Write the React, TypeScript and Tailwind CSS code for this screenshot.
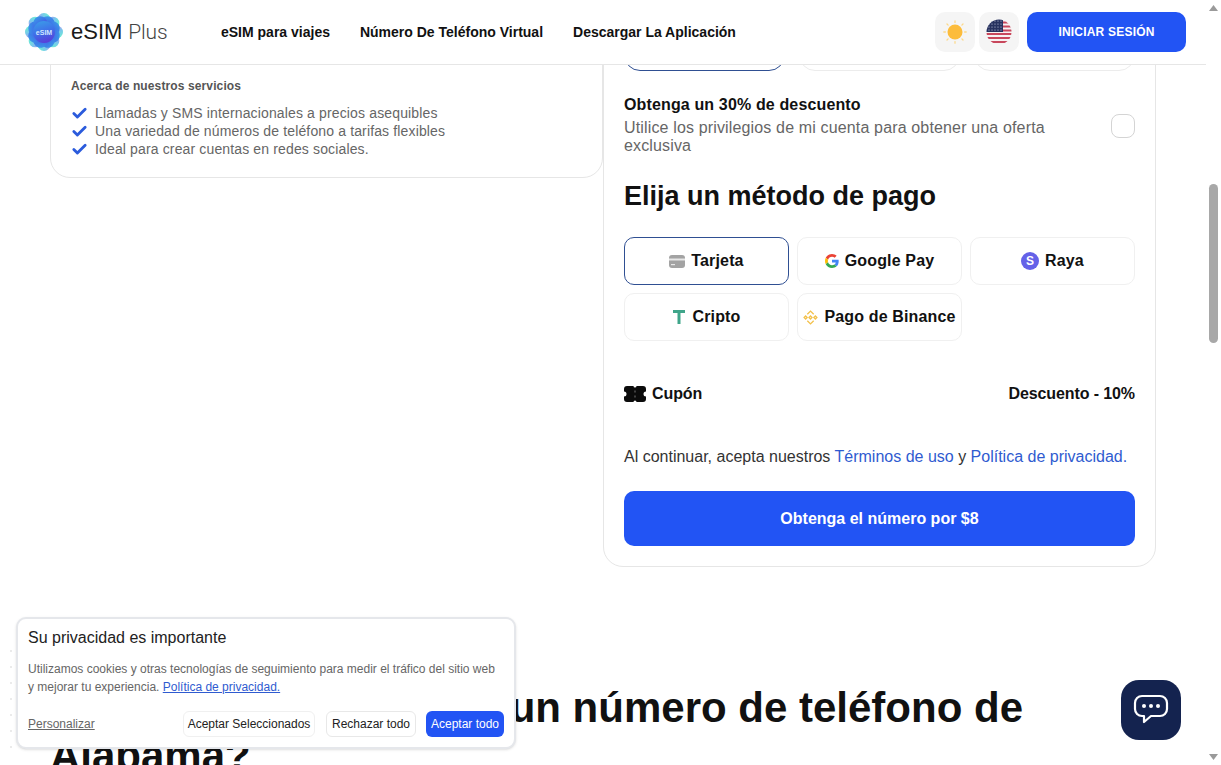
import { Check } from "lucide-react";

const navLinks = ["eSIM para viajes", "Número De Teléfono Virtual", "Descargar La Aplicación"];
const services = [
  "Llamadas y SMS internacionales a precios asequibles",
  "Una variedad de números de teléfono a tarifas flexibles",
  "Ideal para crear cuentas en redes sociales.",
];
const bannerDots = [0, 1, 2, 3, 4, 5, 6];

function Logo() {
  const petals = [0, 45, 90, 135, 180, 225, 270, 315];
  return (
    <svg width="40" height="40" viewBox="0 0 40 40">
      <defs>
        <linearGradient id="logoFill" x1="0.3" y1="0" x2="0.6" y2="1">
          <stop offset="0" stopColor="#3b9ae8" />
          <stop offset="0.5" stopColor="#3f6fe8" />
          <stop offset="1" stopColor="#5a3bd8" />
        </linearGradient>
        <linearGradient id="logoGlow" x1="0" y1="0.7" x2="1" y2="0.3">
          <stop offset="0" stopColor="#b06be8" />
          <stop offset="0.5" stopColor="#58b8e8" />
          <stop offset="1" stopColor="#48ecc8" />
        </linearGradient>
      </defs>
      <g opacity="0.8">
        {petals.map((a) => (
          <circle key={a} cx="20" cy="7.500" r="6.500" fill="url(#logoGlow)" transform={`rotate(${a} 20 20)`} />
        ))}
      </g>
      {petals.map((a) => (
        <circle key={a} cx="20" cy="10.500" r="7" fill="url(#logoFill)" transform={`rotate(${a + 22} 20 20)`} />
      ))}
      <circle cx="20" cy="20" r="11" fill="url(#logoFill)" />
      <text x="20" y="22.500" textAnchor="middle" fontSize="7" fontWeight="700" fill="#cfe6ff" fontFamily="Liberation Sans">
        eSIM
      </text>
    </svg>
  );
}

function SunIcon() {
  return (
    <svg width="24" height="24" viewBox="0 0 24 24" stroke="#fcd98a" strokeWidth="1.300" strokeLinecap="round">
      <circle cx="12" cy="12" r="7.500" fill="#fcbc3b" stroke="none" />
      <path d="M12 .8v1.600M12 21.600v1.600M.8 12h1.600M21.600 12h1.600M4 4l1.100 1.100M18.900 18.900 20 20M4 20l1.100-1.100M18.900 5.100 20 4" />
    </svg>
  );
}

function FlagIcon() {
  const lower = [14, 18, 22];
  const upper = [2.500, 6.500, 10.500];
  const stars = [2, 5, 8, 11];
  return (
    <svg width="26" height="26" viewBox="0 0 26 26">
      <clipPath id="flagClip">
        <circle cx="13" cy="13" r="12.500" />
      </clipPath>
      <g clipPath="url(#flagClip)">
        <rect width="26" height="26" fill="#f7f2f2" />
        {lower.map((y) => (
          <rect key={y} x="0" y={y} width="26" height="2" fill="#c8475c" />
        ))}
        {upper.map((y) => (
          <rect key={y} x="16" y={y} width="10" height="2" fill="#c8475c" />
        ))}
        <rect width="17" height="13" fill="#27325f" />
        {stars.map((y) =>
          [3, 6, 9, 12, 15].map((x) => <circle key={`${x}-${y}`} cx={x} cy={y} r="0.600" fill="#c9cfe6" />),
        )}
      </g>
    </svg>
  );
}

function CardIcon() {
  return (
    <svg width="16" height="13" viewBox="0 0 16 13">
      <rect width="16" height="13" rx="3" fill="#a3a3a3" />
      <rect y="3.500" width="16" height="2" fill="#e8e8e8" />
      <rect x="2" y="9" width="4" height="1.200" fill="#e8e8e8" />
    </svg>
  );
}

function GoogleIcon() {
  return (
    <svg width="14" height="14" viewBox="0 0 48 48">
      <path fill="#EA4335" d="M24 9.500c3.500 0 6.700 1.200 9.100 3.600l6.800-6.800C35.800 2.500 30.300 0 24 0 14.600 0 6.500 5.400 2.600 13.200l7.900 6.200C12.400 13.700 17.700 9.500 24 9.500z" />
      <path fill="#4285F4" d="M46.900 24.500c0-1.600-.1-3.100-.4-4.500H24v9h12.900c-.6 3-2.200 5.500-4.700 7.200l7.700 6c4.500-4.200 7-10.300 7-17.700z" />
      <path fill="#FBBC05" d="M10.500 28.600c-.5-1.400-.8-3-.8-4.600s.3-3.200.8-4.600l-7.900-6.200C.9 16.500 0 20.100 0 24s.9 7.500 2.600 10.800l7.900-6.200z" />
      <path fill="#34A853" d="M24 48c6.500 0 11.900-2.100 15.900-5.800l-7.700-6c-2.200 1.400-4.900 2.300-8.200 2.300-6.300 0-11.600-4.200-13.500-9.900l-7.900 6.200C6.500 42.600 14.600 48 24 48z" />
    </svg>
  );
}

function StripeIcon() {
  return (
    <svg width="18" height="18" viewBox="0 0 18 18">
      <circle cx="9" cy="9" r="9" fill="#6461e8" />
      <text x="9" y="13.300" textAnchor="middle" fontSize="12" fontWeight="700" fill="#fff" fontFamily="Liberation Sans">
        S
      </text>
    </svg>
  );
}

function TetherIcon() {
  return (
    <svg width="14" height="14" viewBox="-1 0 14 14" fill="#3fa58a">
      <path d="M0 0h12v3H7.500v11h-3V3H0z" />
    </svg>
  );
}

function BinanceIcon() {
  return (
    <svg width="15" height="15" viewBox="0 0 16 16" fill="none" stroke="#f3c14b" strokeWidth="1.400">
      <path d="M4.600 4.600 8 1.200l3.400 3.400M4.600 11.400 8 14.800l3.400-3.400" />
      <path d="M1.200 8 2.800 6.400 4.400 8 2.800 9.600zM11.600 8l1.600-1.600L14.800 8l-1.600 1.600zM6.400 8 8 6.400 9.600 8 8 9.600z" />
    </svg>
  );
}

function CouponIcon() {
  return (
    <svg width="22" height="16" viewBox="0 0 22 16" fill="#0b0b0b">
      <path d="M3 0h6.500a1.500 1.500 0 0 0 3 0H19a3 3 0 0 1 3 3v2.500a2.500 2.500 0 0 0 0 5V13a3 3 0 0 1-3 3h-6.500a1.500 1.500 0 0 0-3 0H3a3 3 0 0 1-3-3v-2.500a2.500 2.500 0 0 0 0-5V3a3 3 0 0 1 3-3z" />
      <path d="M10.500 4.500h1v2h-1zM10.500 9.500h1v2h-1z" fill="#777" />
    </svg>
  );
}

function PayOption({ icon, label, active }: { icon: React.ReactNode; label: string; active?: boolean }) {
  return (
    <button
      className={`flex h-12 items-center justify-center gap-[6px] rounded-[10px] border bg-white text-base font-bold tracking-[0.15px] text-[#111] ${
        active ? "border-[#2f4f92]" : "border-[#f0f0f0]"
      }`}
    >
      {icon}
      {label}
    </button>
  );
}

export default function App() {
  return (
    <div className="flex h-screen overflow-hidden bg-white font-['Liberation_Sans',Arial,sans-serif]">
      <div className="relative flex min-w-0 flex-1 flex-col">
        {/* HEADER */}
        <header className="flex h-[65px] shrink-0 items-center border-b border-[#e6e6e6] pr-5 pl-[24px]">
          <div className="flex w-[197px] items-center gap-[7px]">
            <Logo />
            <span className="flex items-baseline gap-[6px] text-[22px] leading-none text-[#1a1a1a]">
              eSIM
              <span className="font-['Roboto',sans-serif] text-[21px] font-light tracking-[-0.2px] text-[#444]">Plus</span>
            </span>
          </div>
          <nav className="flex gap-[30px]">
            {navLinks.map((link) => (
              <a key={link} className="text-sm font-bold text-[#111]">
                {link}
              </a>
            ))}
          </nav>
          <div className="ml-auto flex items-center gap-1">
            <div className="flex size-10 items-center justify-center rounded-[10px] bg-[#f5f5f5]">
              <SunIcon />
            </div>
            <div className="flex size-10 items-center justify-center rounded-[10px] bg-[#f5f5f5]">
              <FlagIcon />
            </div>
            <button className="ml-1 h-10 w-[159px] rounded-[10px] bg-[#2254f4] text-xs font-bold tracking-[0.2px] text-white">
              INICIAR SESIÓN
            </button>
          </div>
        </header>

        {/* PAGE */}
        <main className="flex-1 overflow-hidden px-[50px]">
          <div className="-mt-[63px] grid grid-cols-2 items-start">
            <div className="flex h-[176px] flex-col justify-end rounded-[20px] border border-[#e6e6e6] p-5 pb-[19px]">
              <h3 className="text-xs font-bold tracking-[0.12px] text-[#555]">Acerca de nuestros servicios</h3>
              <ul className="mt-[10px] flex flex-col">
                {services.map((s) => (
                  <li key={s} className="flex h-[18px] items-center gap-[7px] text-sm tracking-[0.14px] text-[#666]">
                    <Check size={17} strokeWidth={4} className="text-[#2b5bdc]" />
                    {s}
                  </li>
                ))}
              </ul>
            </div>

            <div className="rounded-[20px] border border-[#e6e6e6] p-5">
              <div className="grid grid-cols-3 gap-[14px]">
                <div className="h-12 rounded-[16px] border border-[#2f4f92]" />
                <div className="h-12 rounded-[16px] border border-[#ececec]" />
                <div className="h-12 rounded-[16px] border border-[#ececec]" />
              </div>

              <div className="mt-[25px] flex items-center justify-between">
                <div className="w-[450px]">
                  <p className="text-base leading-[18px] font-bold tracking-[0.14px] text-[#111]">
                    Obtenga un 30% de descuento
                  </p>
                  <p className="mt-[5px] text-base leading-[18px] tracking-[0.15px] text-[#666]">
                    Utilice los privilegios de mi cuenta para obtener una oferta exclusiva
                  </p>
                </div>
                <div className="size-6 rounded-lg border border-[#d4d4d4]" />
              </div>

              <h2 className="mt-[25px] text-[27px] leading-[32px] font-bold text-[#111]">Elija un método de pago</h2>

              <div className="mt-[25px] grid grid-cols-3 gap-2">
                <PayOption icon={<CardIcon />} label="Tarjeta" active />
                <PayOption icon={<GoogleIcon />} label="Google Pay" />
                <PayOption icon={<StripeIcon />} label="Raya" />
                <PayOption icon={<TetherIcon />} label="Cripto" />
                <PayOption icon={<BinanceIcon />} label="Pago de Binance" />
              </div>

              <div className="mt-[41px] flex items-center justify-between text-base font-bold tracking-[-0.1px] text-[#111]">
                <span className="flex items-center gap-[6px]">
                  <CouponIcon />
                  Cupón
                </span>
                <span>Descuento - 10%</span>
              </div>

              <p className="mt-[42px] text-base leading-[18px] text-[#333]">
                Al continuar, acepta nuestros <a className="text-[#2f5bd0]">Términos de uso</a> y{" "}
                <a className="text-[#2f5bd0]">Política de privacidad.</a>
              </p>

              <button className="mt-[25px] h-[55px] w-full rounded-[10px] bg-[#2254f4] text-base font-bold text-white">
                Obtenga el número por $8
              </button>
            </div>
          </div>

          <h2 className="mt-[117px] text-[42px] leading-[48px] font-bold text-[#111]">
            ¿Cómo puedo obtener un número de teléfono de Alabama?
          </h2>
        </main>

        {/* faint dots left of the cookie box */}
        <div className="absolute top-[650px] left-[10px] flex flex-col gap-[14px]">
          {bannerDots.map((d) => (
            <span key={d} className="size-[2px] rounded-full bg-[#e4e4e4]" />
          ))}
        </div>

        {/* COOKIES */}
        <div className="absolute bottom-4 left-4 flex h-[132px] w-[500px] flex-col rounded-[10px] border-2 border-[#e5e7eb] bg-white px-[10px] pt-[9px] shadow-sm">
          <p className="text-base leading-[20px] text-[#222]">Su privacidad es importante</p>
          <p className="mt-[12px] text-xs leading-[18px] text-[#666]">
            Utilizamos cookies y otras tecnologías de seguimiento para medir el tráfico del sitio web y mejorar tu
            experiencia. <a className="text-[#2f5bd0] underline">Política de privacidad.</a>
          </p>
          <div className="mt-[15px] flex items-center text-xs text-[#222]">
            <a className="text-[#666] underline">Personalizar</a>
            <button className="ml-auto h-[26px] w-[132px] rounded-md border border-[#f0f0f0]">Aceptar Seleccionados</button>
            <button className="ml-[11px] h-[26px] w-[90px] rounded-md border border-[#e8e8e8]">Rechazar todo</button>
            <button className="ml-[10px] h-[26px] w-[78px] rounded-md bg-[#2254f4] text-white">Aceptar todo</button>
          </div>
        </div>

        {/* CHAT */}
        <button className="absolute right-[25px] bottom-[25px] flex size-[60px] items-center justify-center rounded-[18px] bg-[#14234f]">
          <svg width="36" height="32" viewBox="0 0 36 32" fill="none">
            <path
              d="M9 2h18a7 7 0 0 1 7 7v6a7 7 0 0 1-7 7H18l-7 6v-6H9a7 7 0 0 1-7-7V9a7 7 0 0 1 7-7z"
              stroke="#fff"
              strokeWidth="2.200"
              strokeLinejoin="round"
            />
            <circle cx="11" cy="12" r="2" fill="#fff" />
            <circle cx="18" cy="12" r="2" fill="#fff" />
            <circle cx="25" cy="12" r="2" fill="#fff" />
          </svg>
        </button>
      </div>

      {/* SCROLLBAR */}
      <div className="flex w-[15px] shrink-0 flex-col items-center bg-white">
        <svg width="9" height="6" viewBox="0 0 9 6" className="mt-[5px]" fill="#9a9a9a">
          <path d="M4.500 0 9 6H0z" />
        </svg>
        <div className="mt-[173px] h-[159px] w-[9px] rounded-[5px] bg-[#a8a8a8]" />
        <svg width="9" height="6" viewBox="0 0 9 6" className="mt-auto mb-[5px]" fill="#9a9a9a">
          <path d="M0 0h9L4.500 6z" />
        </svg>
      </div>
    </div>
  );
}
